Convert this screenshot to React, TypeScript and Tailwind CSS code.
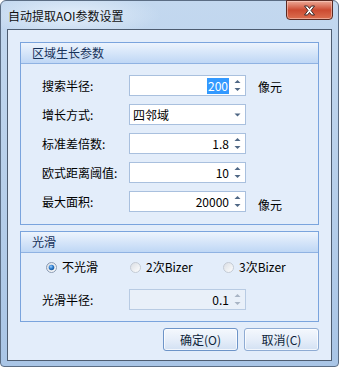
import React from "react";

const FONT = { fontFamily: '"Noto Sans CJK SC", "Noto Sans", sans-serif' };

function Spinner({ disabled }: { disabled?: boolean }) {
  const c = disabled ? "#a8b4c4" : "#4f6784";
  return (
    <svg width="7" height="13" viewBox="0 0 7 13" className="ml-[5px] shrink-0">
      <path d="M0.5 4 L3.5 1 L6.5 4 Z" fill={c} />
      <path d="M0.5 9 L3.5 12 L6.5 9 Z" fill={c} />
    </svg>
  );
}

function NumInput({
  value,
  selected,
  disabled,
}: {
  value: string;
  selected?: boolean;
  disabled?: boolean;
}) {
  return (
    <div
      className={
        "w-[117px] h-[21px] border flex items-center justify-end pr-[4px] " +
        (disabled ? "bg-[#e9f0f9] border-[#b8cbe3]" : "bg-white border-[#a9c0de]")
      }
    >
      {selected ? (
        <span className="bg-[#3399ff] text-white leading-[16px] px-[1px]">{value}</span>
      ) : (
        <span className="text-black leading-[16px]">{value}</span>
      )}
      <Spinner disabled={disabled} />
    </div>
  );
}

function Row({
  label,
  children,
  unit,
  unitClass,
}: {
  label: string;
  children: React.ReactNode;
  unit?: string;
  unitClass?: string;
}) {
  return (
    <div className="flex items-center h-[21px]">
      <div className="w-[87px] text-black">{label}</div>
      {children}
      {unit ? <div className={"ml-[12px] text-black " + (unitClass || "")}>{unit}</div> : null}
    </div>
  );
}

function GroupHeader({ title }: { title: string }) {
  return (
    <div className="h-[21px] border-b border-[#8fb2e2] bg-gradient-to-b from-[#edf4fd] to-[#bfd7f5] pl-[11px] flex items-center text-[#17325a]">
      {title}
    </div>
  );
}

function Radio({ checked, label, w }: { checked?: boolean; label: string; w: string }) {
  return (
    <div className={"flex items-center h-[16px] " + w}>
      <svg width="11" height="11" viewBox="0 0 11 11" className="shrink-0">
        <defs>
          <linearGradient id={"rg" + label} x1="0" y1="0" x2="1" y2="1">
            <stop offset="0" stopColor="#d9dde3" />
            <stop offset="1" stopColor="#ffffff" />
          </linearGradient>
          <radialGradient id={"rd" + label} cx="0.4" cy="0.35" r="0.7">
            <stop offset="0" stopColor="#9fd0ff" />
            <stop offset="0.5" stopColor="#2f7fd0" />
            <stop offset="1" stopColor="#17508f" />
          </radialGradient>
        </defs>
        <circle cx="5.5" cy="5.5" r="5" fill={"url(#rg" + label + ")"} stroke={checked ? "#8a9bb3" : "#c3cad4"} strokeWidth="1" />
        {checked ? <circle cx="5.5" cy="5.5" r="2.8" fill={"url(#rd" + label + ")"} /> : null}
      </svg>
      <span className="ml-[5px] text-black">{label}</span>
    </div>
  );
}

function Button({ label, def }: { label: string; def?: boolean }) {
  return (
    <div
      className={
        "w-[75px] h-[23px] rounded-[3px] border flex items-center justify-center text-[#0f1f3a] bg-gradient-to-b from-[#f4f8fd] via-[#e6eef9] to-[#d3e1f3] shadow-[inset_0_0_0_1px_rgba(255,255,255,0.7)] " +
        (def ? "border-[#6d94c8]" : "border-[#8eabd3]")
      }
    >
      {label}
    </div>
  );
}

export default function App() {
  return (
    <div
      className="w-[339px] h-[367px] border border-[#5b6d84] rounded-t-[6px] rounded-b-[4px] bg-gradient-to-b from-[#c3d8ef] via-[#b7cfea] to-[#a9c5e6] flex flex-col text-[12px]"
      style={FONT}
    >
      <div className="h-[28px] flex items-start justify-between bg-[radial-gradient(ellipse_90px_22px_at_70px_14px,#e3eefa,transparent)]">
        <div className="self-center pl-[7px] text-[#111] mt-[1px]">自动提取AOI参数设置</div>
        <div className="mr-[5px] -mt-px w-[47px] h-[20px] rounded-b-[4px] border border-[#5a2a22] bg-gradient-to-b from-[#eba897] via-[#cc4a31] to-[#dc6f50] flex items-center justify-center shadow-[inset_0_0_0_1px_rgba(255,220,210,0.5)]">
          <svg width="13" height="11" viewBox="0 0 13 11">
            <path
              d="M1.5 1 H4.5 L6.5 3.5 L8.5 1 H11.5 L8 5.5 L11.5 10 H8.5 L6.5 7.5 L4.5 10 H1.5 L5 5.5 Z"
              fill="#ffffff"
              stroke="#3b2a2a"
              strokeWidth="1"
              strokeLinejoin="round"
            />
          </svg>
        </div>
      </div>
      <div className="mx-[6px] h-[332px] border border-[#4d5c70] bg-[#e3edfa] flex flex-col pt-[12px] px-[12px] pb-[9px]">
        <div className="h-[183px] border border-[#7aa4dd] flex flex-col">
          <GroupHeader title="区域生长参数" />
          <div className="flex flex-col gap-[8px] pt-[11px] pl-[21px]">
            <Row label="搜索半径:" unit="像元" unitClass="mt-[3px]">
              <NumInput value="200" selected />
            </Row>
            <Row label="增长方式:">
              <div className="w-[117px] h-[21px] bg-white border border-[#a9c0de] flex items-center pl-[3px] pr-[4px]">
                <span className="flex-1 text-black">四邻域</span>
                <svg width="7" height="4" viewBox="0 0 7 4">
                  <path d="M0.5 0.5 L3.5 3.5 L6.5 0.5 Z" fill="#4f6784" />
                </svg>
              </div>
            </Row>
            <Row label="标准差倍数:">
              <NumInput value="1.8" />
            </Row>
            <Row label="欧式距离阈值:">
              <NumInput value="10" />
            </Row>
            <Row label="最大面积:" unit="像元" unitClass="mt-[7px]">
              <NumInput value="20000" />
            </Row>
          </div>
        </div>
        <div className="mt-[6px] h-[91px] border border-[#7aa4dd] flex flex-col">
          <GroupHeader title="光滑" />
          <div className="flex flex-col pt-[6px]">
            <div className="flex items-center pl-[25px]">
              <Radio checked label="不光滑" w="w-[84px]" />
              <Radio label="2次Bizer" w="w-[93px]" />
              <Radio label="3次Bizer" w="w-[80px]" />
            </div>
            <div className="mt-[14px] pl-[21px]">
              <Row label="光滑半径:">
                <NumInput value="0.1" disabled />
              </Row>
            </div>
          </div>
        </div>
        <div className="mt-[6px] flex justify-end gap-[6px]">
          <Button label="确定(O)" def />
          <Button label="取消(C)" />
        </div>
      </div>
    </div>
  );
}
